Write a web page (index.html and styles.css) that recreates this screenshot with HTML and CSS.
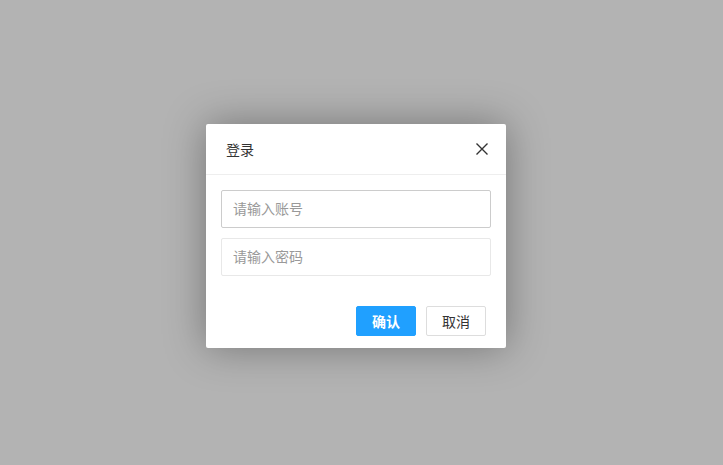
FILE: index.html
```html
<!DOCTYPE html>
<html lang="zh">
<head>
<meta charset="utf-8">
<title>登录</title>
<link rel="stylesheet" href="styles.css">
</head>
<body>
<div class="overlay">
  <div class="dialog">
    <div class="dialog-header">
      <span class="dialog-title">登录</span>
      <button class="close" aria-label="关闭">
        <svg width="12" height="12" viewBox="0 0 12 12"><path d="M0.5 0.5L11.5 11.5M11.5 0.5L0.5 11.5" stroke="#333" stroke-width="1.4" fill="none"/></svg>
      </button>
    </div>
    <div class="dialog-body">
      <input class="field focused" type="text" placeholder="请输入账号" autofocus>
      <input class="field" type="password" placeholder="请输入密码">
    </div>
    <div class="dialog-footer">
      <button class="btn btn-primary">确认</button>
      <button class="btn btn-default">取消</button>
    </div>
  </div>
</div>
</body>
</html>
```
FILE: styles.css
```css
html, body {
  margin: 0;
  padding: 0;
  height: 100%;
}
body {
  background: #b3b3b3;
  font-family: "Liberation Sans", "Noto Sans CJK SC", sans-serif;
  overflow: hidden;
}
.overlay {
  padding: 124px 0 0 206px;
}
.dialog {
  width: 300px;
  background: #fff;
  border-radius: 2px;
  box-shadow: 0 0 40px rgba(0, 0, 0, 0.35);
}
.dialog-header {
  height: 50px;
  border-bottom: 1px solid #eee;
  display: flex;
  align-items: center;
  justify-content: space-between;
  padding: 0 18px 0 20px;
}
.dialog-title {
  font-size: 14px;
  color: #333;
}
.close {
  border: 0;
  background: none;
  padding: 0;
  width: 12px;
  height: 12px;
  display: flex;
  cursor: pointer;
}
.dialog-body {
  padding: 15px 15px 0;
  display: flex;
  flex-direction: column;
  gap: 10px;
}
.field {
  box-sizing: border-box;
  width: 270px;
  height: 38px;
  margin: 0;
  border: 1px solid #e8e8e8;
  border-radius: 2px;
  padding: 0 11px;
  font-size: 14px;
  font-family: inherit;
  color: #333;
  outline: none;
  caret-color: #333;
}
.field.focused {
  border-color: #ccc;
}
.field::placeholder {
  color: #999;
}
.dialog-footer {
  display: flex;
  justify-content: flex-end;
  gap: 10px;
  padding: 30px 20px 12px;
}
.btn {
  width: 60px;
  height: 30px;
  border-radius: 2px;
  font-size: 14px;
  font-family: inherit;
  padding: 0;
  cursor: pointer;
}
.btn-primary {
  background: #20a0ff;
  border: 1px solid #20a0ff;
  color: #fff;
  font-weight: bold;
}
.btn-default {
  background: #fff;
  border: 1px solid #ddd;
  color: #333;
}
```
